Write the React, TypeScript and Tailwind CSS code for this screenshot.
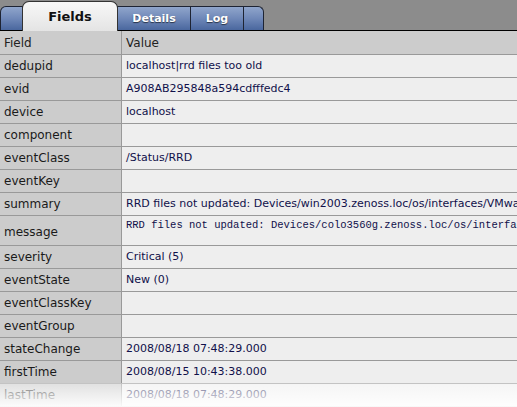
import { FC, JSX } from 'react';
import { clsx } from 'clsx';

interface EventField {
  name: string;
  value: string;
  mono?: boolean;
}

const fields: EventField[] = [
  { name: 'dedupid', value: 'localhost|rrd files too old' },
  { name: 'evid', value: 'A908AB295848a594cdfffedc4' },
  { name: 'device', value: 'localhost' },
  { name: 'component', value: '' },
  { name: 'eventClass', value: '/Status/RRD' },
  { name: 'eventKey', value: '' },
  { name: 'summary', value: 'RRD files not updated: Devices/win2003.zenoss.loc/os/interfaces/VMware Accelerated AMD PCNet Adapter' },
  {
    name: 'message',
    value: 'RRD files not updated: Devices/colo3560g.zenoss.loc/os/interfaces/FastEthernet0_1',
    mono: true,
  },
  { name: 'severity', value: 'Critical (5)' },
  { name: 'eventState', value: 'New (0)' },
  { name: 'eventClassKey', value: '' },
  { name: 'eventGroup', value: '' },
  { name: 'stateChange', value: '2008/08/18 07:48:29.000' },
  { name: 'firstTime', value: '2008/08/15 10:43:38.000' },
  { name: 'lastTime', value: '2008/08/18 07:48:29.000' },
];

const blueTab = clsx(
  'flex h-[24px] shrink-0 items-center justify-center border border-b-0 border-[#1e2433]',
  'bg-linear-to-b from-[#90a5cb] via-[#6f88b8] to-[#4a679e]',
  'pt-[1px] text-[11px] font-bold text-white [text-shadow:0_1px_1px_rgba(0,0,0,0.6)]',
);

const TabBar: FC = (): JSX.Element => (
  <div
    data-tag="tab-bar"
    className="flex h-[31px] items-end border-b border-black bg-[#8c8c8c]"
  >
    <div className={clsx(blueTab, 'w-[23px] rounded-tl-[6px]')} />
    <div
      data-tag="tab-bar__active"
      className={clsx(
        'relative z-10 -mx-px -mb-px flex h-[30px] w-[96px] shrink-0 items-center justify-center',
        'rounded-t-[7px] border border-b-0 border-[#333]',
        'bg-linear-to-b from-[#f7f7f7] via-[#eeeeee] to-[#e4e4e4]',
        'text-[13px] font-bold text-[#111]',
      )}
    >
      Fields
    </div>
    <div className={clsx(blueTab, 'w-[74px]')}>Details</div>
    <div className={clsx(blueTab, '-ml-px w-[54px]')}>Log</div>
    <div className={clsx(blueTab, '-ml-px w-[21px] rounded-tr-[6px]')} />
  </div>
);

export default function App(): JSX.Element {
  return (
    <div
      className="relative h-[407px] w-[517px] overflow-hidden bg-white text-[12px]"
      style={{ fontFamily: '"DejaVu Sans", Verdana, sans-serif' }}
    >
      <TabBar />

      <div
        data-tag="field-table"
        className="grid grid-cols-[122px_1fr]"
      >
        <div className="flex h-[24px] items-center border-r border-b border-[#999] bg-[#cccccc] pl-[4px] text-[#222]">
          Field
        </div>
        <div className="flex h-[24px] items-center border-b border-[#999] bg-[#cccccc] pl-[4px] text-[#222]">
          Value
        </div>

        {fields.map(field => (
          <div
            key={field.name}
            className="contents"
          >
            <div
              className={clsx(
                'flex items-center border-r border-b border-[#999] bg-[#cccccc] pl-[4px] text-[#1a1a1a]',
                field.mono ? 'h-[30px] pt-[2px]' : 'h-[23px]',
              )}
            >
              {field.name}
            </div>
            <div
              className={clsx(
                'overflow-hidden border-b border-[#999] bg-[#eeeeee] pl-[4px] whitespace-nowrap text-[#10104a]',
                field.mono
                  ? 'h-[30px] pt-[2px] text-[10.5px] leading-[14px]'
                  : 'flex h-[23px] items-center text-[11px]',
              )}
              style={field.mono ? { fontFamily: '"Liberation Mono", "Courier New", monospace' } : undefined}
            >
              {field.value}
            </div>
          </div>
        ))}
      </div>

      {/* reflection style fade at the bottom edge */}
      <div
        aria-hidden="true"
        className="pointer-events-none absolute inset-x-0 bottom-0 h-[24px] bg-linear-to-b from-white/40 to-white/95"
      />
    </div>
  );
}
